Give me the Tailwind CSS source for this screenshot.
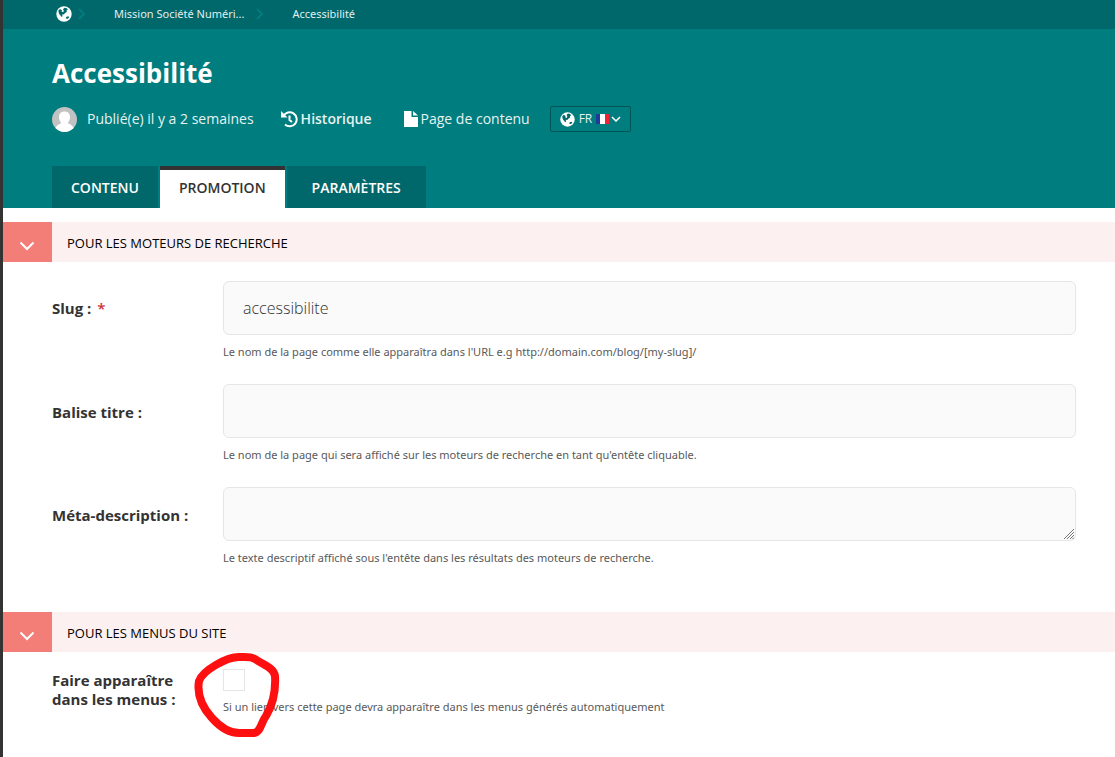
<!DOCTYPE html>
<html lang="fr">
<head>
<meta charset="utf-8">
<title>Accessibilité</title>
<script src="https://cdn.jsdelivr.net/npm/@tailwindcss/browser@4"></script>
</head>
<body class="min-h-screen border-l-[3px] border-[#333] bg-white font-['Open_Sans',sans-serif] text-[#333] overflow-x-hidden">
<svg class="hidden" xmlns="http://www.w3.org/2000/svg">
  <symbol id="globe" viewBox="0 0 16 16">
    <circle cx="8" cy="8" r="7.700" fill="#fff"/>
    <path fill="#00696b" d="M2.300 4.800 4 3 6 4.200 5.500 5.500 7.300 6.300 7.800 4.800 7 3.200 8.500 1.700 10.800 2.200 11.800 3.600 10.500 4.500 10.800 6 9 7 7.800 8.500 6 8.300 6.600 10 5.800 11 4.500 9.500 3 7.700ZM10 11 12.300 10.300 13.200 11.200 11.800 12.700 10.300 12.700Z"/>
  </symbol>
  <symbol id="chevron" viewBox="0 0 16 10"><path d="m1.5 1.5 6.5 6.5 6.5-6.5" fill="none" stroke="currentColor" stroke-width="2"/></symbol>
</svg>
<header class="bg-[#007d7e] text-white">
  <nav aria-label="Fil d'Ariane" class="flex h-[29px] items-center bg-[#00676a] pb-[2px] pl-[53px] font-['Noto_Sans',sans-serif] text-[11px] text-[#e0efef]">
    <a href="#" aria-label="Site" class="flex items-center"><svg class="size-4"><use href="#globe"/></svg></a>
    <svg class="ml-[6px] h-3 w-2 text-[#007d7e]" viewBox="0 0 8 12"><path d="m1 1 5 5-5 5" fill="none" stroke="currentColor" stroke-width="2"/></svg>
    <a href="#" class="ml-7 pt-[2px]">Mission Société Numéri...</a>
    <svg class="ml-3 h-3 w-2 text-[#007d7e]" viewBox="0 0 8 12"><path d="m1 1 5 5-5 5" fill="none" stroke="currentColor" stroke-width="2"/></svg>
    <a href="#" class="ml-7 pt-[2px]">Accessibilité</a>
  </nav>
  <div class="pl-[49px]">
    <h1 class="pt-6 text-[26px] leading-10 font-bold">Accessibilité</h1>
    <div class="mt-[13px] flex h-[26px] items-center text-sm text-[#e6f2f2]">
      <svg class="size-[25px]" viewBox="0 0 25 25"><defs><clipPath id="round"><circle cx="12.5" cy="12.5" r="12.5"/></clipPath></defs><g clip-path="url(#round)"><path fill="#c2c2c2" d="M0 0h25v25H0z"/><path fill="#fff" d="M12.5 4.500c3.600 0 5.700 2.400 5.500 6-.1 2-.9 3.600-1.800 4.700v1.300c2.600.8 5 2.500 6 5.500v4H3v-4c.8-3 3.200-4.700 5.800-5.500v-1.300C7.900 14.100 7.100 12.500 7 10.500c-.2-3.600 1.900-6 5.500-6z"/></g></svg>
      <span class="ml-[10px]">Publié(e) il y a 2 semaines</span>
      <a href="#" class="ml-[27px] flex items-center gap-[3px] font-semibold">
        <svg class="size-[17px]" viewBox="0 0 17 17" fill="none" stroke="#fff" stroke-width="2"><path d="M2.500 5A7 7 0 1 1 4 13.500M8.500 4.500v4.500l2.500 2"/><path fill="#fff" stroke="none" d="M0 0v6.500h6.500z"/></svg>Historique</a>
      <span class="ml-8 flex items-center gap-[3px]"><svg class="h-4 w-[14px]" viewBox="0 0 14 16" fill="#fff"><path d="M0 0h7.500v6H14v10H0zM9 0l5 4.600H9z"/></svg>Page de contenu</span>
      <button class="ml-5 flex h-[26px] items-center rounded-[2px] border border-[#005456] px-[9px] text-xs"><svg class="mr-1 size-[15px]"><use href="#globe"/></svg>FR<svg class="ml-1 h-[10px] w-[13px]" viewBox="0 0 13 10"><path fill="#fff" d="M0 0h13v10H0z"/><path fill="#1e3a9a" d="M0 0h4v10H0z"/><path fill="#ee2436" d="M9 0h4v10H9z"/></svg><svg class="ml-[2px] h-[6px] w-[10px]" viewBox="0 0 10 6"><path d="m1 1 4 4 4-4" fill="none" stroke="#fff" stroke-width="1.500"/></svg></button>
    </div>
    <div role="tablist" class="mt-[34px] flex h-[42px] gap-[2px] text-sm font-semibold">
      <button role="tab" class="bg-[#00676a] px-[19px] pt-[2px]">CONTENU</button>
      <button role="tab" aria-selected="true" class="border-t-4 border-[#333] bg-white px-[19px] pb-[2px] text-[#333]">PROMOTION</button>
      <button role="tab" class="bg-[#00676a] px-[25px] pt-[2px]">PARAMÈTRES</button>
    </div>
  </div>
</header>
<main class="pt-[14px]">
  <section>
    <h2 class="flex h-10 items-center bg-[#fcf1f0] text-[13px] text-black"><button aria-label="Replier" class="mr-[15px] flex h-10 w-[49px] items-center justify-center bg-[#f37e77] pt-2 pr-[2px] text-white"><svg class="h-[10px] w-4"><use href="#chevron"/></svg></button><span class="pt-1">POUR LES MOTEURS DE RECHERCHE</span></h2>
    <div class="grid grid-cols-[171px_1fr] gap-y-[22px] pt-[19px] pr-[39px] pb-11 pl-[49px]">
      <label for="slug" class="pt-[17px] text-[15px] leading-5 font-bold">Slug : <span class="ml-[2px] font-semibold text-[#cd3238]">*</span></label>
      <div><input id="slug" value="accessibilite" class="block h-[54px] w-full rounded-md border border-[#e6e6e6] bg-[#fafafa] px-[19px] text-base font-light"><p class="mt-[7px] font-['Noto_Sans',sans-serif] text-[11px] leading-5 text-[#595959]">Le nom de la page comme elle apparaîtra dans l'URL e.g http://domain.com/blog/[my-slug]/</p></div>
      <label for="titre" class="pt-[18px] text-[15px] leading-5 font-bold">Balise titre :</label>
      <div><input id="titre" class="block h-[54px] w-full rounded-md border border-[#e6e6e6] bg-[#fafafa] px-[19px] text-base font-light"><p class="mt-[7px] font-['Noto_Sans',sans-serif] text-[11px] leading-5 text-[#595959]">Le nom de la page qui sera affiché sur les moteurs de recherche en tant qu'entête cliquable.</p></div>
      <label for="meta" class="pt-[18px] text-[15px] leading-5 font-bold">Méta-description :</label>
      <div class="relative"><textarea id="meta" class="block h-[54px] w-full resize-none rounded-md border border-[#e6e6e6] bg-[#fafafa] px-[19px] py-3 text-base font-light"></textarea>
        <svg class="pointer-events-none absolute top-[42px] right-[2px] size-[10px]" viewBox="0 0 10 10" fill="none" stroke="#777"><path d="M0 10 10 0M3 10l7-7M6 10l4-4M8.500 10 10 8.500"/></svg>
        <p class="mt-[7px] font-['Noto_Sans',sans-serif] text-[11px] leading-5 text-[#595959]">Le texte descriptif affiché sous l'entête dans les résultats des moteurs de recherche.</p></div>
    </div>
  </section>
  <section>
    <h2 class="flex h-10 items-center bg-[#fcf1f0] text-[13px] text-black"><button aria-label="Replier" class="mr-[15px] flex h-10 w-[49px] items-center justify-center bg-[#f37e77] pt-2 pr-[2px] text-white"><svg class="h-[10px] w-4"><use href="#chevron"/></svg></button><span class="pt-1">POUR LES MENUS DU SITE</span></h2>
    <div class="grid grid-cols-[171px_1fr] pt-[17px] pr-[39px] pl-[49px]">
      <label for="menus" class="pt-[2px] text-[15px] leading-[19px] font-bold">Faire apparaître<br>dans les menus :</label>
      <div class="relative"><input id="menus" type="checkbox" class="block size-[22px] appearance-none border border-[#e6e6e6] bg-white"><p class="mt-[6px] font-['Noto_Sans',sans-serif] text-[11px] leading-5 text-[#595959]">Si un lien vers cette page devra apparaître dans les menus générés automatiquement</p>
        <svg class="pointer-events-none absolute -top-[17px] -left-[30px] h-[86px] w-[88px]" viewBox="0 0 88 86" fill="none" stroke="#ff1010" stroke-width="8" stroke-linecap="round" stroke-linejoin="round"><path d="M46 5C34 5 10 18 6 29 4 41 8 54 19 66 27 75 36 81 46 81H61C68 80 68 70 73 64 80 52 83 40 82 24 81 16 71 13 65 9 59 4 54 5 46 5Z"/></svg>
      </div>
    </div>
  </section>
</main>
</body>
</html>
